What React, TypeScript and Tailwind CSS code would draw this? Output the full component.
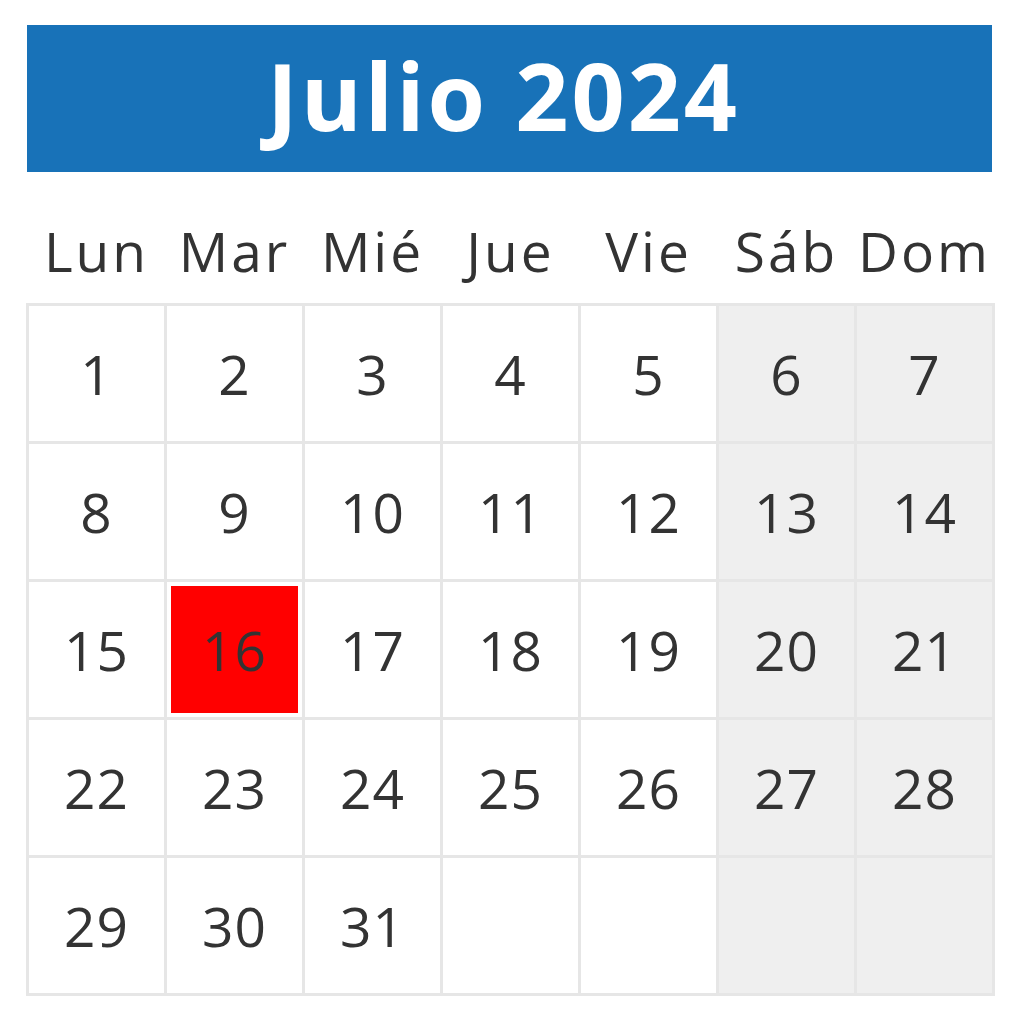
import React from "react";

const days = ["Lun", "Mar", "Mié", "Jue", "Vie", "Sáb", "Dom"];
const cells: (number | null)[] = [];
for (let i = 1; i <= 31; i++) cells.push(i);
while (cells.length < 35) cells.push(null);

export default function App() {
  return (
    <div
      className="w-[1019px] h-[1024px] bg-white flex flex-col"
      style={{ fontFamily: '"Open Sans", "Noto Sans", sans-serif' }}
    >
      <div className="ml-[27px] mt-[25px] w-[965px] h-[147px] bg-[#1872b8] flex items-center justify-center">
        <span className="text-white font-bold text-[93px] leading-none tracking-[3px] mt-[-6px] ml-[-12px]">
          Julio 2024
        </span>
      </div>
      <div className="ml-[26px] w-[969px] grid grid-cols-7 gap-x-[3px] px-[3px] h-[131px] items-center">
        {days.map((d) => (
          <div key={d} className="text-center text-[#333333] text-[55px] leading-none mt-[26px] tracking-[3px]">
            {d}
          </div>
        ))}
      </div>
      <div className="ml-[26px] w-[969px] bg-[#e6e6e6] p-[3px] grid grid-cols-7 gap-[3px]">
        {cells.map((n, i) => {
          const col = i % 7;
          const weekend = col >= 5;
          return (
            <div
              key={i}
              className={`h-[135px] flex items-center justify-center ${weekend ? "bg-[#efefef]" : "bg-white"}`}
            >
              {n === 16 ? (
                <div className="w-[127px] h-[127px] bg-[#ff0000] flex items-center justify-center text-[#333333] text-[55px] leading-none tracking-[1px]">
                  {n}
                </div>
              ) : (
                <span className="text-[#333333] text-[55px] leading-none tracking-[1px]">{n ?? ""}</span>
              )}
            </div>
          );
        })}
      </div>
    </div>
  );
}
